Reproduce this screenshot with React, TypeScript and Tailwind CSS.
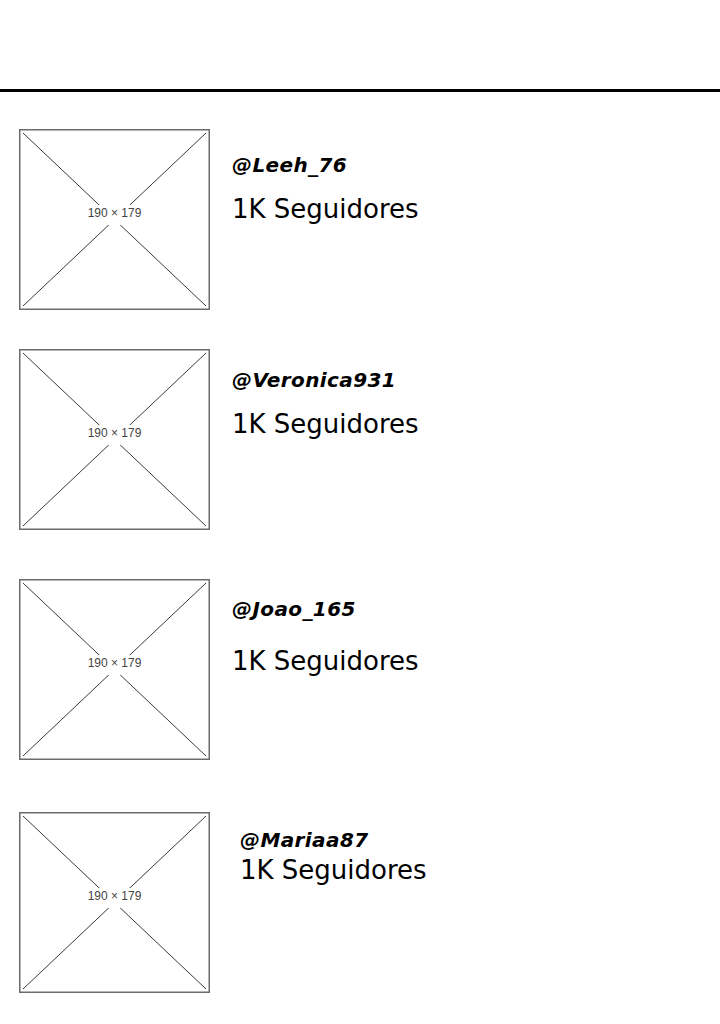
import React from 'react';

type Profile = {
  handle: string;
  followers: string;
  gapTop: string;
  textLeft: string;
  handleTop: string;
  followersTop: string;
};

const profiles: Profile[] = [
  { handle: '@Leeh_76', followers: '1K Seguidores', gapTop: 'mt-[37px]', textLeft: 'ml-[22px]', handleTop: 'pt-[26px]', followersTop: 'mt-[19px]' },
  { handle: '@Veronica931', followers: '1K Seguidores', gapTop: 'mt-[39px]', textLeft: 'ml-[22px]', handleTop: 'pt-[21px]', followersTop: 'mt-[19px]' },
  { handle: '@Joao_165', followers: '1K Seguidores', gapTop: 'mt-[49px]', textLeft: 'ml-[22px]', handleTop: 'pt-[20px]', followersTop: 'mt-[27px]' },
  { handle: '@Mariaa87', followers: '1K Seguidores', gapTop: 'mt-[52px]', textLeft: 'ml-[30px]', handleTop: 'pt-[18px]', followersTop: 'mt-[5px]' },
];

const Placeholder = () => (
  <div className="relative w-[191px] h-[181px] shrink-0">
    <svg width="191" height="181" viewBox="0 0 191 181" className="absolute inset-0">
      <rect x="0.75" y="0.75" width="189.5" height="179.5" fill="white" stroke="#6b6b6b" strokeWidth="1.5" />
      <line x1="4" y1="4" x2="187" y2="177" stroke="#3a3a3a" strokeWidth="1" />
      <line x1="187" y1="4" x2="4" y2="177" stroke="#3a3a3a" strokeWidth="1" />
    </svg>
    <div className="absolute inset-0 flex items-center justify-center pb-[10px]">
      <span className="bg-white px-[3px] pb-[4px] font-['Liberation_Sans',sans-serif] text-[12px] leading-[16px] text-[#444]">
        190 × 179
      </span>
    </div>
  </div>
);

export default function App() {
  return (
    <div className="w-[720px] h-[1024px] bg-white overflow-hidden">
      <div className="pt-[89px]">
        <div className="h-[3px] bg-black" />
      </div>
      <div className="flex flex-col">
        {profiles.map(profile => (
          <div key={profile.handle} className={`flex ${profile.gapTop} pl-[19px]`}>
            <Placeholder />
            <div className={`${profile.textLeft} ${profile.handleTop} flex flex-col`}>
              <span className="font-['DejaVu_Sans',sans-serif] font-bold italic text-[20px] leading-[20px] tracking-[0.4px] text-black">
                {profile.handle}
              </span>
              <span className={`${profile.followersTop} font-['DejaVu_Sans',sans-serif] text-[26px] leading-[30px] text-black`}>
                {profile.followers}
              </span>
            </div>
          </div>
        ))}
      </div>
    </div>
  );
}
